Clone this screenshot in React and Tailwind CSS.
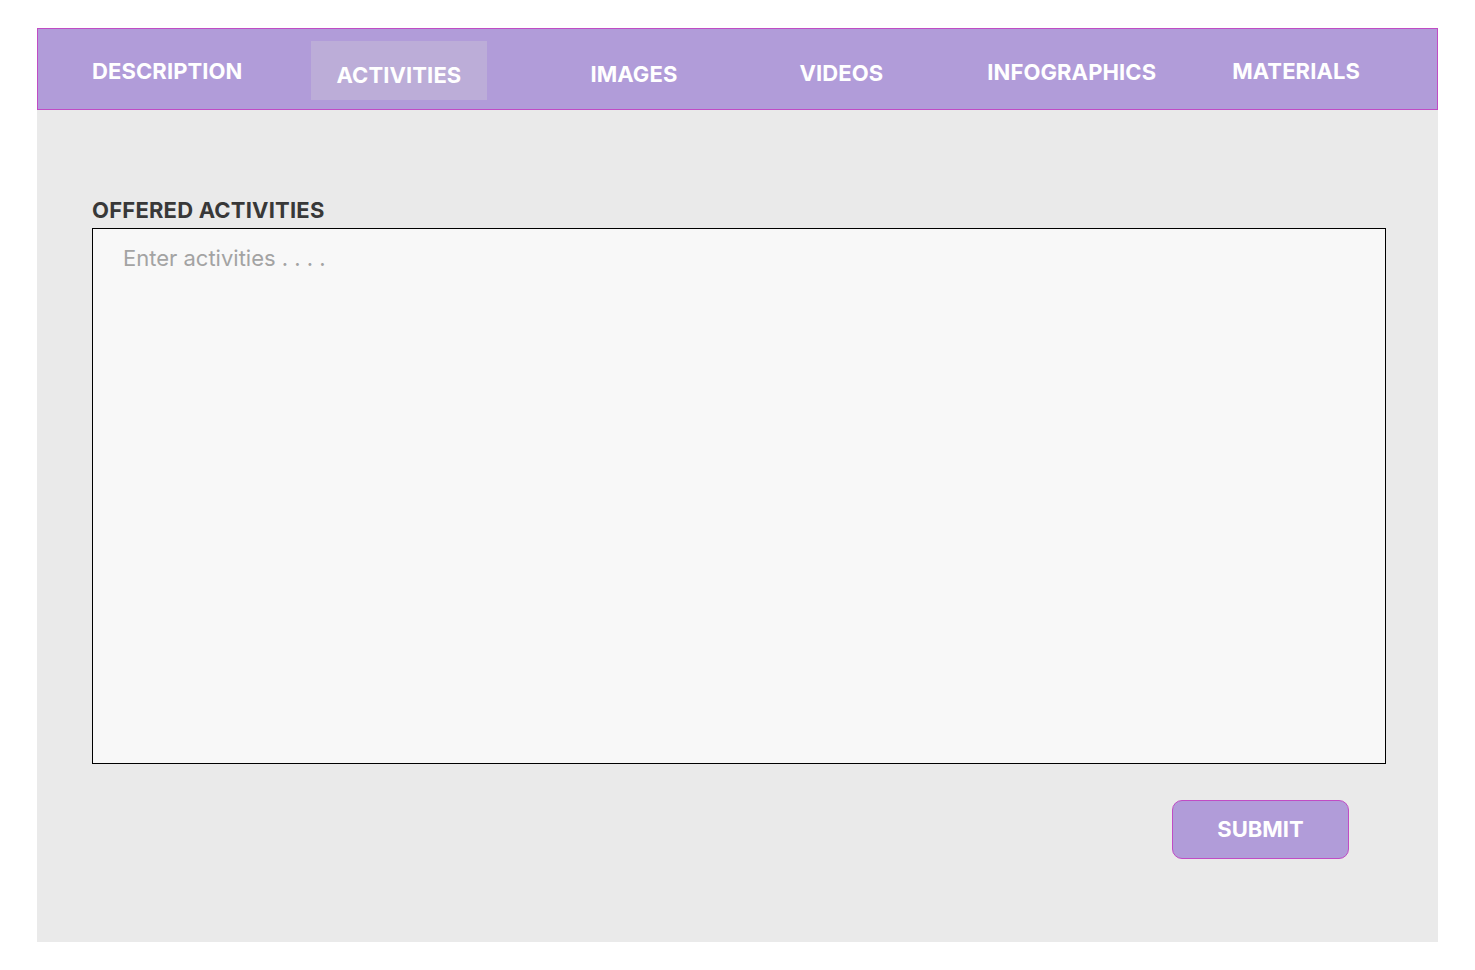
import React, { useState } from 'react';

const tabs = [
  { label: 'DESCRIPTION', cls: 'ml-[54px] mt-[28px]' },
  { label: 'ACTIVITIES', cls: 'ml-[68px] mt-[12px]' },
  { label: 'IMAGES', cls: 'ml-[103px] mt-[31px]' },
  { label: 'VIDEOS', cls: 'ml-[122px] mt-[30px]' },
  { label: 'INFOGRAPHICS', cls: 'ml-[104px] mt-[29px]' },
  { label: 'MATERIALS', cls: 'ml-[76px] mt-[28px]' },
];

const App = () => {
  const [active, setActive] = useState('ACTIVITIES');
  const [text, setText] = useState('');

  return (
    <div className="min-h-[970px] bg-white pt-[28px] font-['Inter',sans-serif]">
      <div className="mx-[37px] w-[1401px] h-[914px] bg-[#eaeaea]">
        <nav className="flex h-[82px] items-start border border-[#c04cc4] bg-[#b19cd9]">
          {tabs.map((t) => (
            <button
              key={t.label}
              type="button"
              onClick={() => setActive(t.label)}
              className={`${t.cls} flex items-start text-[22px] font-bold leading-[28px] tracking-[0.1px] text-white ${
                active === t.label ? 'h-[59px] bg-[#bcadd8] px-[26px] pt-[20px]' : ''
              }`}
            >
              {t.label}
            </button>
          ))}
        </nav>

        <section className="px-[55px] pt-[88px]">
          <label className="block text-[22px] font-bold leading-[24px] tracking-[0.2px] text-[#383838]">
            OFFERED ACTIVITIES
          </label>
          <textarea
            value={text}
            onChange={(e) => setText(e.target.value)}
            placeholder="Enter activities . . . ."
            className="mt-[6px] block h-[536px] w-[1294px] resize-none border border-black bg-[#f8f8f8] px-[30px] py-[15px] text-[22px] leading-[28px] text-[#333] outline-none placeholder:text-[#a3a3a3]"
          />
          <div className="mt-[36px] flex justify-end pr-[34px]">
            <button
              type="button"
              className="h-[59px] w-[177px] rounded-[10px] border border-[#c04cc4] bg-[#b19cd9] text-[22px] font-bold text-white"
            >
              SUBMIT
            </button>
          </div>
        </section>
      </div>
    </div>
  );
};

export default App;
